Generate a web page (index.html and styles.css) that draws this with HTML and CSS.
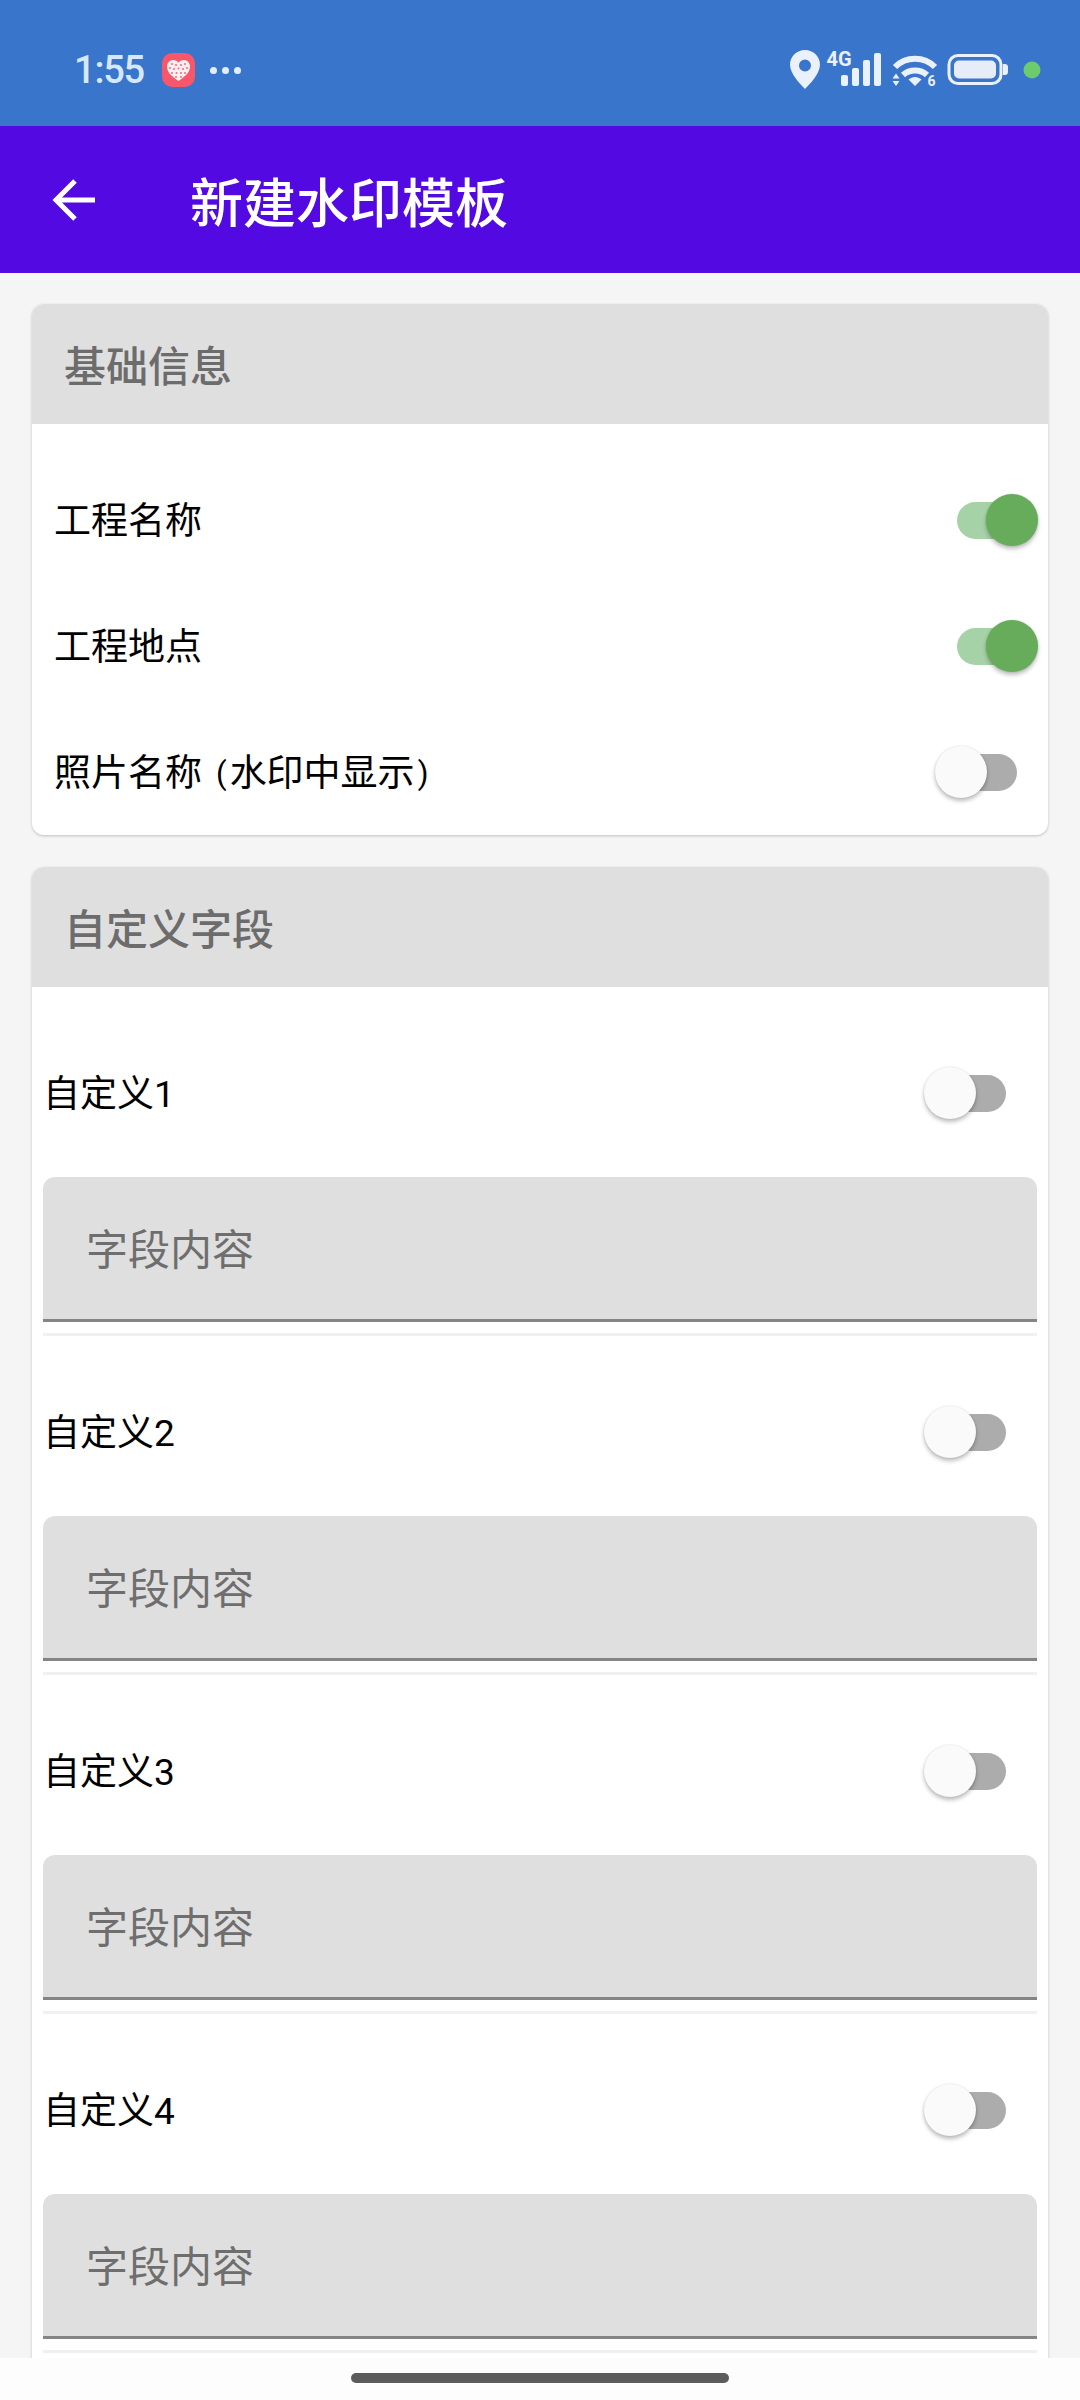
FILE: index.html
```html
<!DOCTYPE html>
<html lang="zh-CN">
<head>
<meta charset="utf-8">
<title>新建水印模板</title>
<link rel="stylesheet" href="styles.css">
</head>
<body>
<div class="screen">
  <header class="statusbar">
    <span class="time">1:55</span>
    <svg class="appicon" viewBox="0 0 33 34" aria-hidden="true">
      <rect width="33" height="34" rx="10" fill="#f8566a"/>
      <path d="M16.500 28C11 24 5 20 5 13.500 5 10 7.700 7 11 7c2.300 0 4.300 1 5.500 2.800C17.700 8 19.700 7 22 7c3.300 0 6 3 6 6.500C28 20 22 24 16.500 28z" fill="#fbeef0"/>
      <g fill="#f26d7e">
        <circle cx="10" cy="11" r="1"/><circle cx="14" cy="12" r="1"/><circle cx="19" cy="12" r="1"/><circle cx="23" cy="11" r="1"/>
        <circle cx="8" cy="15" r="1"/><circle cx="12" cy="16" r="1"/><circle cx="16.500" cy="15.500" r="1"/><circle cx="21" cy="16" r="1"/><circle cx="25" cy="15" r="1"/>
        <circle cx="10" cy="20" r="1"/><circle cx="14.500" cy="20" r="1"/><circle cx="19" cy="20" r="1"/><circle cx="23" cy="20" r="1"/>
        <circle cx="14" cy="24" r="1"/><circle cx="19" cy="24" r="1"/>
      </g>
    </svg>
    <span class="dots"><i></i><i></i><i></i></span>
    <svg class="sysicons" viewBox="790 48 252 44" aria-hidden="true">
      <path fill-rule="evenodd" d="M805 50c-8.300 0-15 6.500-15 14.600C790 74 800 84 805 89c5-5 15-15 15-24.400C820 56.500 813.300 50 805 50zm0 9.500a6 6 0 1 1 0 12 6 6 0 0 1 0-12z" fill="#eaf1fb"/>
      <text x="826.500" y="65.500" class="tiny">4G</text>
      <g fill="#eaf1fb">
        <rect x="841" y="75" width="7" height="11" rx="2"/>
        <rect x="852" y="68" width="7" height="18" rx="2"/>
        <rect x="863" y="60" width="7" height="26" rx="2"/>
        <rect x="874" y="53" width="7" height="33" rx="2"/>
      </g>
      <g fill="none" stroke="#eaf1fb" stroke-width="6">
        <path d="M895 67c11-11 29-11 40 0"/>
        <path d="M903 75c6.500-6 17.500-6 24 0"/>
      </g>
      <path d="M908.500 79.500c4-3.500 9-3.500 13 0l-6.500 6.500z" fill="#eaf1fb"/>
      <path d="M896 73.500l-3.500 5h7zM896 86l-3.500-5h7z" fill="#eaf1fb"/>
      <text x="927.500" y="86" class="tiny six">6</text>
      <rect x="949" y="55.500" width="52" height="28" rx="9" fill="none" stroke="#eaf1fb" stroke-width="3"/>
      <rect x="954" y="60.500" width="42" height="18" rx="5" fill="#e6edf9"/>
      <path d="M1003 64h2c1.700 0 3 1.300 3 3v5c0 1.700-1.300 3-3 3h-2z" fill="#eaf1fb"/>
      <circle cx="1032" cy="70" r="8.500" fill="#6bcb6d"/>
    </svg>
  </header>

  <div class="appbar">
    <svg class="back" viewBox="0 0 48 44" aria-hidden="true">
      <path d="M45 22H7M25 3 6 22l19 19" fill="none" stroke="#fff" stroke-width="5"/>
    </svg>
    <h1 class="title">新建水印模板</h1>
  </div>

  <main class="content">
    <section class="card">
      <h2 class="card-head">基础信息</h2>
      <div class="basic-list">
        <div class="basic-row"><span class="label">工程名称</span><span class="switch on"><i class="thumb"></i></span></div>
        <div class="basic-row"><span class="label">工程地点</span><span class="switch on"><i class="thumb"></i></span></div>
        <div class="basic-row"><span class="label">照片名称<span class="paren open">(</span>水印中显示<span class="paren close">)</span></span><span class="switch"><i class="thumb"></i></span></div>
      </div>
    </section>

    <section class="card">
      <h2 class="card-head">自定义字段</h2>
      <div class="field-list">
        <div class="field">
          <div class="field-row"><span class="label">自定义1</span><span class="switch"><i class="thumb"></i></span></div>
          <div class="input">字段内容</div>
        </div>
        <div class="field">
          <div class="field-row"><span class="label">自定义2</span><span class="switch"><i class="thumb"></i></span></div>
          <div class="input">字段内容</div>
        </div>
        <div class="field">
          <div class="field-row"><span class="label">自定义3</span><span class="switch"><i class="thumb"></i></span></div>
          <div class="input">字段内容</div>
        </div>
        <div class="field">
          <div class="field-row"><span class="label">自定义4</span><span class="switch"><i class="thumb"></i></span></div>
          <div class="input">字段内容</div>
        </div>
      </div>
    </section>
  </main>

  <footer class="navbar"><span class="handle"></span></footer>
</div>
</body>
</html>
```
FILE: styles.css
```css
* { box-sizing: border-box; }
html, body { margin: 0; padding: 0; }
body {
  width: 1080px;
  height: 2400px;
  overflow: hidden;
  background: #f5f5f6;
  font-family: Roboto, "Noto Sans CJK SC", sans-serif;
}
.screen {
  width: 1080px;
  height: 2400px;
  display: flex;
  flex-direction: column;
  overflow: hidden;
}

/* status bar */
.statusbar {
  height: 126px;
  flex: none;
  background: #3a75cc;
  display: flex;
  align-items: center;
  padding: 14px 38px 0 74px;
}
.time {
  font-family: Roboto, sans-serif;
  font-size: 38px;
  font-weight: 500;
  letter-spacing: -1.200px;
  line-height: 44px;
  color: #d6e8fb;
  width: 88px;
}
.appicon { width: 33px; height: 34px; flex: none; }
.dots { display: flex; gap: 5px; margin-left: 15px; }
.dots i { width: 7px; height: 7px; border-radius: 50%; background: #e3eefb; }
.sysicons { width: 252px; height: 44px; margin-left: auto; flex: none; }
.tiny {
  font-family: Roboto, sans-serif;
  font-weight: 700;
  font-size: 20px;
  fill: #eaf1fb;
}
.six { font-size: 14px; }

/* app bar */
.appbar {
  height: 147px;
  flex: none;
  background: #5209e2;
  display: flex;
  align-items: center;
  padding-left: 50px;
}
.back { width: 48px; height: 44px; flex: none; }
.title {
  margin: 0 0 0 92px;
  font-family: "Noto Sans CJK SC", sans-serif;
  font-size: 53px;
  line-height: 60px;
  font-weight: 500;
  color: #fff;
}

/* content */
.content {
  flex: 1;
  min-height: 0;
  overflow: hidden;
  padding: 31px 32px 0 32px;
  display: flex;
  flex-direction: column;
  gap: 32px;
}
.card {
  flex: none;
  background: #fff;
  border-radius: 12px;
  box-shadow: 0 1px 3px rgba(0, 0, 0, .22);
}
.card-head {
  margin: 0;
  height: 120px;
  padding: 0 0 1px 32px;
  display: flex;
  align-items: center;
  background: #dfdfe0;
  border-radius: 12px 12px 0 0;
  font-family: "Noto Sans CJK SC", sans-serif;
  font-size: 42px;
  font-weight: 500;
  color: #6c6c6c;
}
.label {
  font-size: 37px;
  line-height: 48px;
  padding-top: 3px;
  color: #000;
}
.paren {
  font-family: Roboto, sans-serif;
  font-size: 31px;
  vertical-align: 2px;
}
.paren.open { padding: 0 3px 0 14px; }
.paren.close { padding-left: 3px; }

/* basic info */
.basic-list { padding-top: 33px; }
.basic-row {
  height: 126px;
  padding: 0 31px 0 22px;
  display: flex;
  align-items: center;
  justify-content: space-between;
}

/* custom fields */
.field-list { padding: 10px 11px 60px; }
.field {
  padding-top: 40px;
  padding-bottom: 11px;
  border-bottom: 3px solid #f0f0f0;
}
.field-row {
  height: 112px;
  margin-bottom: 28px;
  padding: 0 31px 0 0;
  display: flex;
  align-items: center;
  justify-content: space-between;
}
.input {
  height: 145px;
  padding: 0 0 3px 43px;
  display: flex;
  align-items: center;
  background: #dfdfdf;
  border-radius: 12px 12px 0 0;
  border-bottom: 3px solid #858585;
  font-size: 42px;
  color: #6e6e6e;
}

/* switch */
.switch {
  position: relative;
  flex: none;
  width: 60px;
  height: 37px;
  border-radius: 19px;
  background: #acacac;
}
.switch.on { background: #a6d2a7; }
.thumb {
  position: absolute;
  top: -7.500px;
  left: -22px;
  width: 52px;
  height: 52px;
  border-radius: 50%;
  background: #fafafa;
  box-shadow: 0 3px 4px rgba(0, 0, 0, .26), 0 0 2px rgba(0, 0, 0, .12);
}
.switch.on .thumb { left: 29px; background: #66ac5b; }

/* nav */
.navbar {
  height: 42px;
  flex: none;
  position: relative;
  z-index: 1;
  background: #fdfdfd;
  display: flex;
  justify-content: center;
  padding-top: 15px;
}
.handle {
  width: 378px;
  height: 10px;
  border-radius: 5px;
  background: #5c5c5c;
}
```
